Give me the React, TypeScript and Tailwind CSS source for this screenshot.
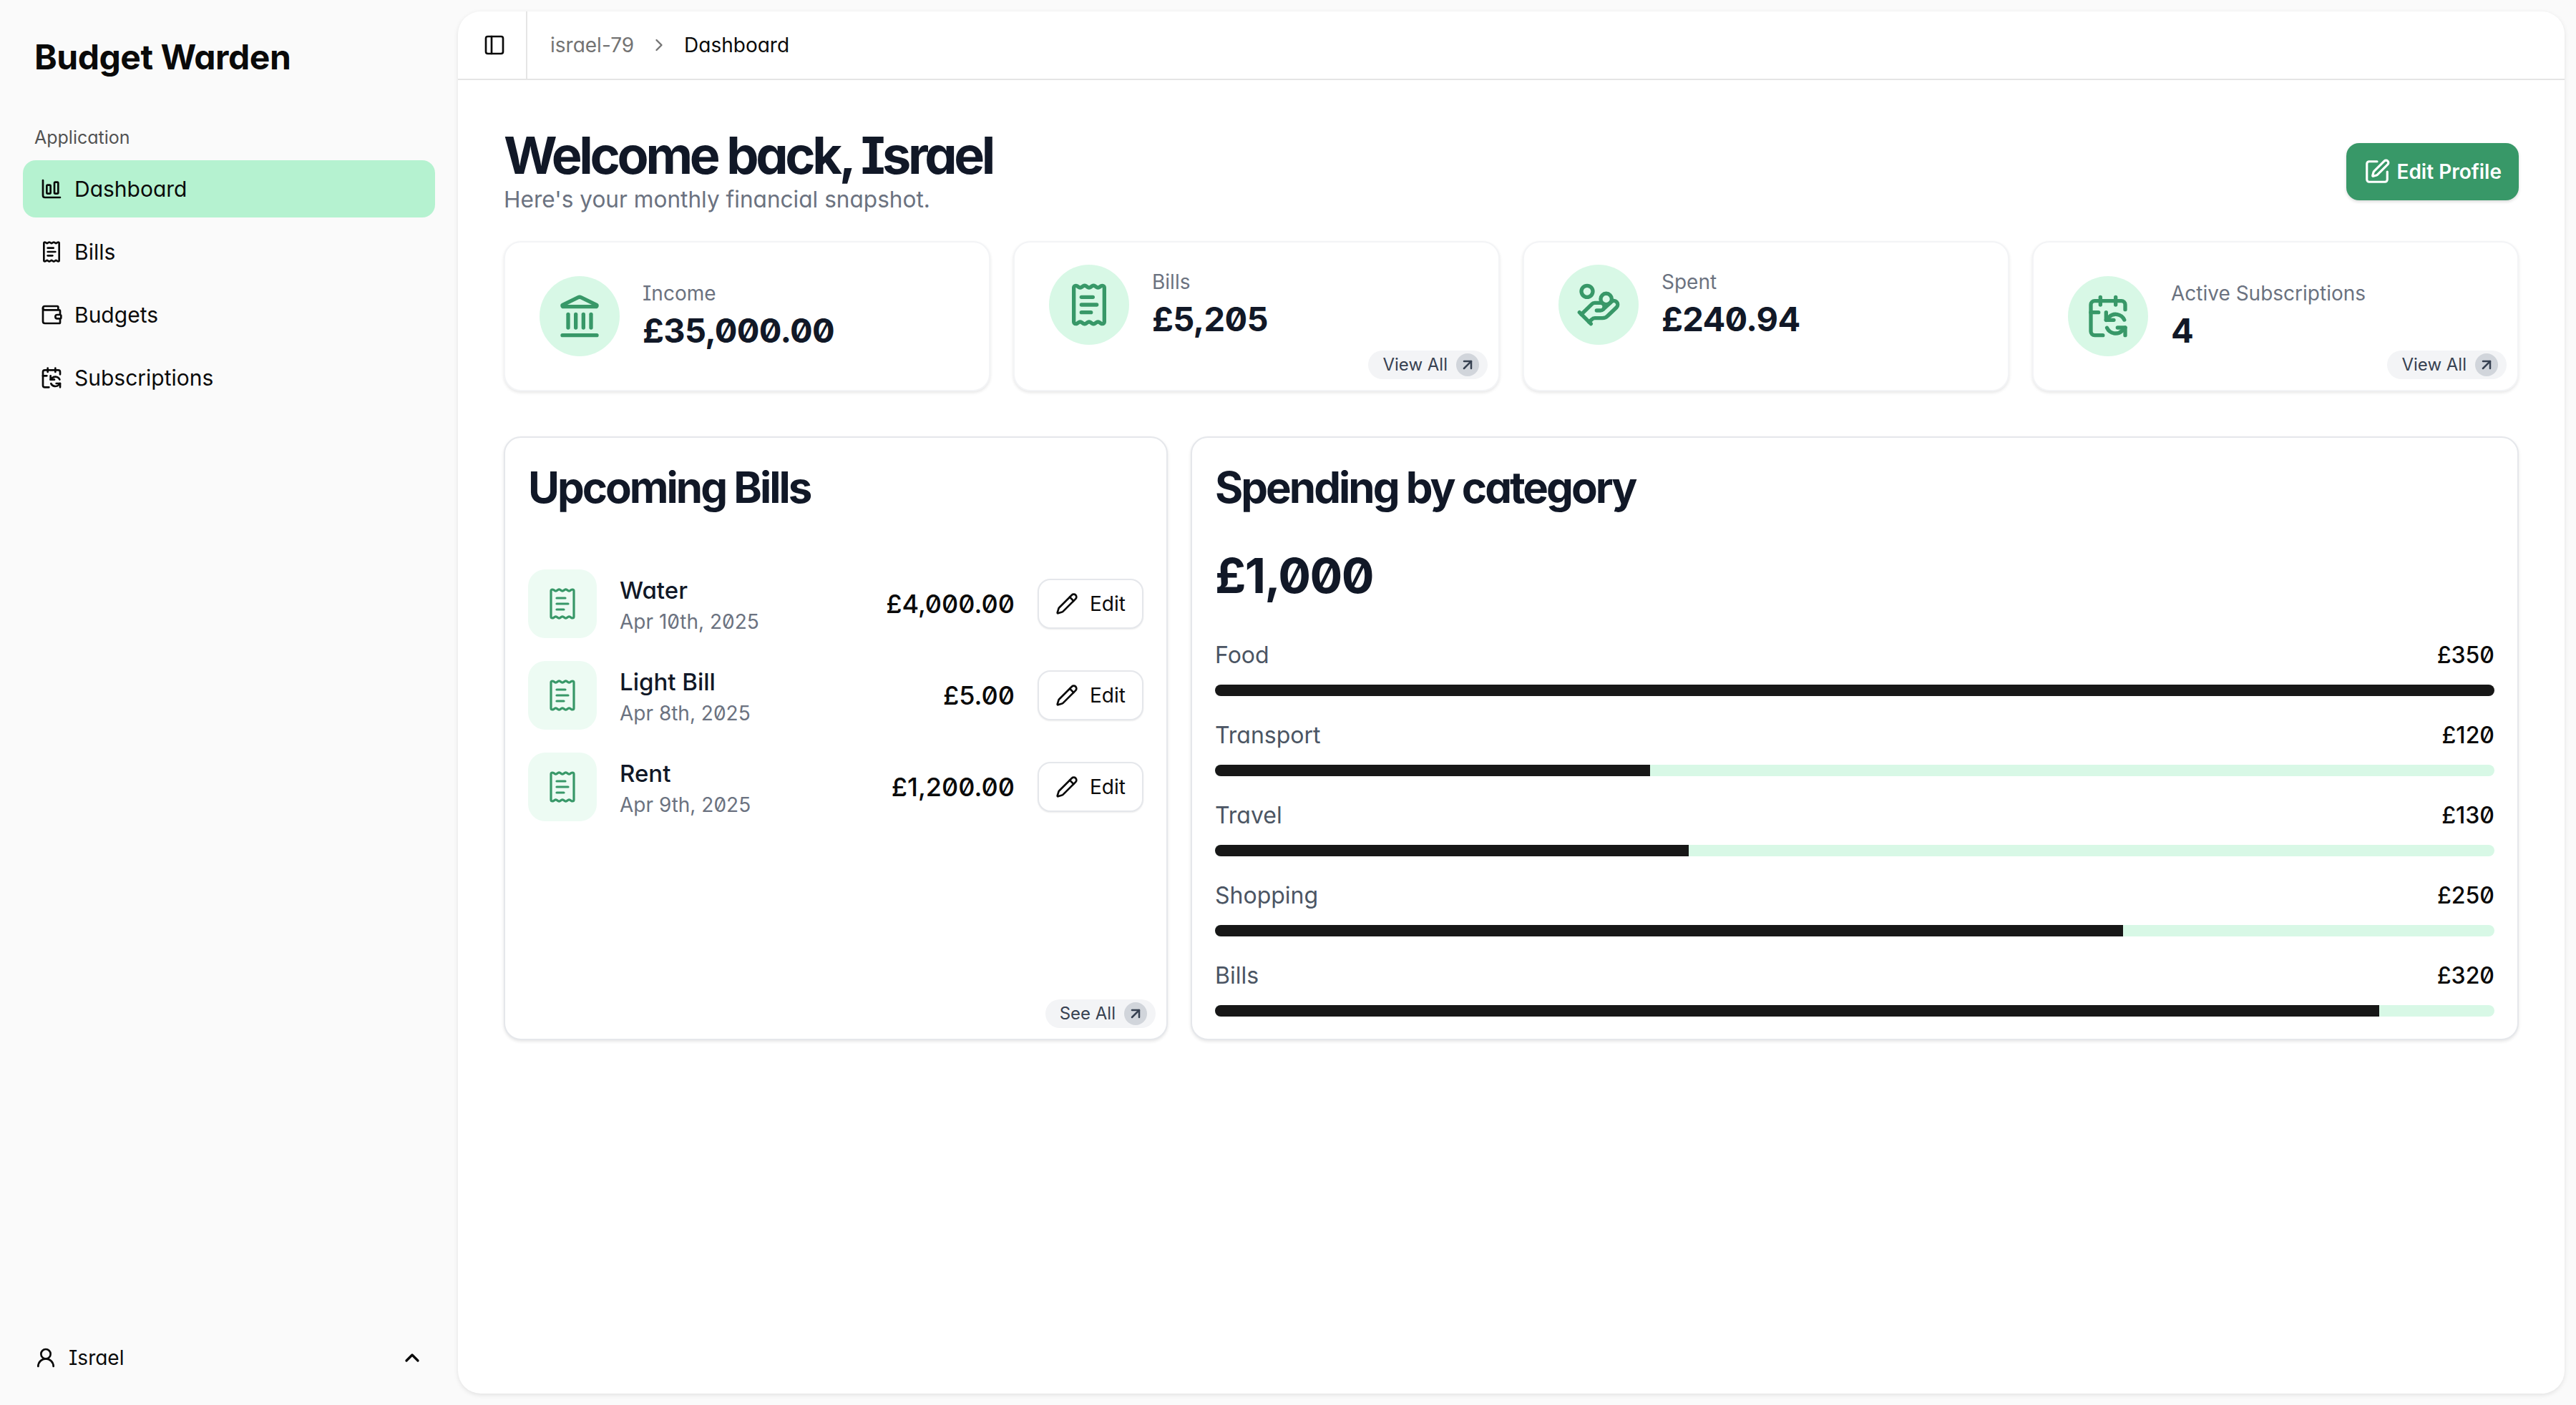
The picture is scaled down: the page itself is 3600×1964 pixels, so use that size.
import {
  ArrowUpRight,
  CalendarSync,
  ChartColumnBig,
  ChevronRight,
  ChevronUp,
  HandCoins,
  Landmark,
  PanelLeft,
  Pencil,
  ReceiptText,
  SquarePen,
  UserRound,
  Wallet,
  type LucideIcon,
} from "lucide-react";

const nav: { label: string; icon: LucideIcon; active?: boolean }[] = [
  { label: "Dashboard", icon: ChartColumnBig, active: true },
  { label: "Bills", icon: ReceiptText },
  { label: "Budgets", icon: Wallet },
  { label: "Subscriptions", icon: CalendarSync },
];

const bills = [
  { name: "Water", date: "Apr 10th, 2025", amount: "£4,000.00" },
  { name: "Light Bill", date: "Apr 8th, 2025", amount: "£5.00" },
  { name: "Rent", date: "Apr 9th, 2025", amount: "£1,200.00" },
];

const categories = [
  { name: "Food", amount: 350 },
  { name: "Transport", amount: 120 },
  { name: "Travel", amount: 130 },
  { name: "Shopping", amount: 250 },
  { name: "Bills", amount: 320 },
];

function PillLink({ label }: { label: string }) {
  return (
    <a className="absolute right-[15px] bottom-[15px] flex h-[40px] items-center gap-[12px] rounded-full bg-[#f3f4f6] pl-[20px] pr-[12px] text-[24px] text-[#374151]">
      {label}
      <span className="flex size-[32px] items-center justify-center rounded-full bg-[#d1d5db]">
        <ArrowUpRight size={24} strokeWidth={2.5} />
      </span>
    </a>
  );
}

function StatCard({
  icon: Icon,
  label,
  value,
  link,
  raised,
}: {
  icon: LucideIcon;
  label: string;
  value: string;
  link?: boolean;
  raised?: boolean;
}) {
  return (
    <div
      className={`relative flex h-[210px] items-center gap-[32px] rounded-[24px] border-2 border-[#f3f4f6] bg-white px-[48px] shadow-[0_2px_4px_rgba(0,0,0,0.1)] ${
        raised ? "pb-[32px]" : ""
      }`}
    >
      <div className="flex size-[112px] shrink-0 items-center justify-center rounded-full bg-[#d8f8e6] text-[#389868]">
        <Icon size={64} strokeWidth={2} />
      </div>
      <div className="pb-[4px]">
        <p className="mb-[4px] text-[28px] leading-[40px] text-[#6b7280]">{label}</p>
        <p className="text-[47px] leading-[56px] font-bold tracking-[-0.015em] text-[#111827]">{value}</p>
      </div>
      {link && <PillLink label="View All" />}
    </div>
  );
}

export default function App() {
  return (
    <div className="flex h-screen bg-[#fafafa] font-['Inter',sans-serif] text-[#0a0a0a] [font-feature-settings:'cv11','cv08','zero']">
      <aside className="flex w-[640px] shrink-0 flex-col">
        <div className="px-[48px] pt-[48px] text-[48px] leading-[64px] font-bold tracking-[-0.01em]">Budget Warden</div>
        <p className="mt-[64px] px-[48px] text-[25px] leading-[32px] text-[#525252]">Application</p>
        <nav className="mt-[16px] flex flex-col gap-[8px] px-[32px]">
          {nav.map(({ label, icon: Icon, active }) => (
            <a
              key={label}
              className={`flex h-[80px] items-center gap-[16px] rounded-[18px] px-[24px] text-[30px] ${
                active ? "bg-[#b5f2d0]" : ""
              }`}
            >
              <Icon size={32} strokeWidth={2} />
              {label}
            </a>
          ))}
        </nav>
        <div className="mt-auto mb-[26px] flex h-[80px] items-center px-[48px] text-[28px]">
          <UserRound size={32} strokeWidth={2} />
          <span className="ml-[16px]">Israel</span>
          <ChevronUp size={32} strokeWidth={2.5} className="ml-auto" />
        </div>
      </aside>

      <main className="my-[16px] mr-[16px] flex flex-1 flex-col rounded-[32px] bg-white shadow-[0_2px_6px_rgba(0,0,0,0.1)]">
        <header className="flex h-[96px] items-center border-b-2 border-[#e5e5e5]">
          <div className="flex h-full w-[97px] items-center justify-center border-r-2 border-[#e5e5e5] pl-[6px]">
            <PanelLeft size={32} strokeWidth={2} />
          </div>
          <div className="ml-[32px] flex items-center text-[28px]">
            <span className="text-[#737373]">israel-79</span>
            <ChevronRight size={28} strokeWidth={2} className="mx-[21px] text-[#737373]" />
            <span>Dashboard</span>
          </div>
        </header>

        <div className="px-[64px] pt-[60px]">
          <div className="flex items-start justify-between">
            <div>
              <h1 className="text-[72px] leading-[90px] font-bold tracking-[-0.06em] text-[#111827]">Welcome back, Israel</h1>
              <p className="mt-[-5px] text-[31.6px] leading-[44px] text-[#6b7280]">Here's your monthly financial snapshot.</p>
            </div>
            <button className="mt-[28px] flex h-[80px] items-center gap-[8px] rounded-[18px] bg-[#389868] px-[24px] text-[28px] font-semibold text-white shadow-[0_2px_4px_rgba(0,0,0,0.15)]">
              <SquarePen size={38} strokeWidth={2} />
              Edit Profile
            </button>
          </div>

          <div className="mt-[36px] grid grid-cols-4 gap-[32px]">
            <StatCard icon={Landmark} label="Income" value="£35,000.00" />
            <StatCard icon={ReceiptText} label="Bills" value="£5,205" link raised />
            <StatCard icon={HandCoins} label="Spent" value="£240.94" raised />
            <StatCard icon={CalendarSync} label="Active Subscriptions" value="4" link />
          </div>

          <div className="mt-[63px] flex h-[844px] gap-[32px]">
            <section className="relative w-[928px] shrink-0 rounded-[24px] border-2 border-[#e5e7eb] bg-white p-[32px] shadow-[0_2px_4px_rgba(0,0,0,0.1)]">
              <h2 className="pt-[1px] text-[60px] leading-[72px] font-bold tracking-[-0.05em] text-[#111827]">Upcoming Bills</h2>
              <ul className="mt-[79px] flex flex-col gap-[32px]">
                {bills.map((bill) => (
                  <li key={bill.name} className="flex h-[96px] items-center">
                    <div className="flex size-[96px] shrink-0 items-center justify-center rounded-[24px] bg-[#edfbf3] text-[#389868]">
                      <ReceiptText size={48} strokeWidth={1.6} />
                    </div>
                    <div className="ml-[32px] pt-[4px]">
                      <p className="text-[33px] leading-[44px] font-medium text-[#111827]">{bill.name}</p>
                      <p className="mt-[2px] text-[28px] leading-[40px] text-[#6b7280]">{bill.date}</p>
                    </div>
                    <span className="ml-auto text-[36px] font-medium">{bill.amount}</span>
                    <button className="ml-[32px] flex h-[70px] w-[148px] items-center justify-center gap-[16px] rounded-[18px] border-2 border-[#e5e7eb] bg-white text-[28px] shadow-[0_1px_2px_rgba(0,0,0,0.08)]">
                      <Pencil size={32} strokeWidth={2} />
                      Edit
                    </button>
                  </li>
                ))}
              </ul>
              <PillLink label="See All" />
            </section>

            <section className="flex-1 rounded-[24px] border-2 border-[#e5e7eb] bg-white p-[32px] shadow-[0_2px_4px_rgba(0,0,0,0.1)]">
              <h2 className="pt-[1px] text-[60px] leading-[72px] font-bold tracking-[-0.05em] text-[#111827]">Spending by category</h2>
              <p className="mt-[39px] text-[68px] leading-[96px] font-bold tracking-[-0.025em] text-[#111827]">£1,000</p>
              <div className="mt-[40px] flex flex-col gap-[31px]">
                {categories.map((c) => (
                  <div key={c.name}>
                    <div className="flex h-[48px] items-center justify-between">
                      <span className="text-[32px] text-[#4b5563]">{c.name}</span>
                      <span className="text-[32px] font-medium">£{c.amount}</span>
                    </div>
                    <div className="mt-[17px] h-[16px] overflow-hidden rounded-full bg-[#d8f8e6]">
                      <div className="h-full bg-[#171717]" style={{ width: `${Math.round((c.amount / 350) * 100)}%` }} />
                    </div>
                  </div>
                ))}
              </div>
            </section>
          </div>
        </div>
      </main>
    </div>
  );
}
